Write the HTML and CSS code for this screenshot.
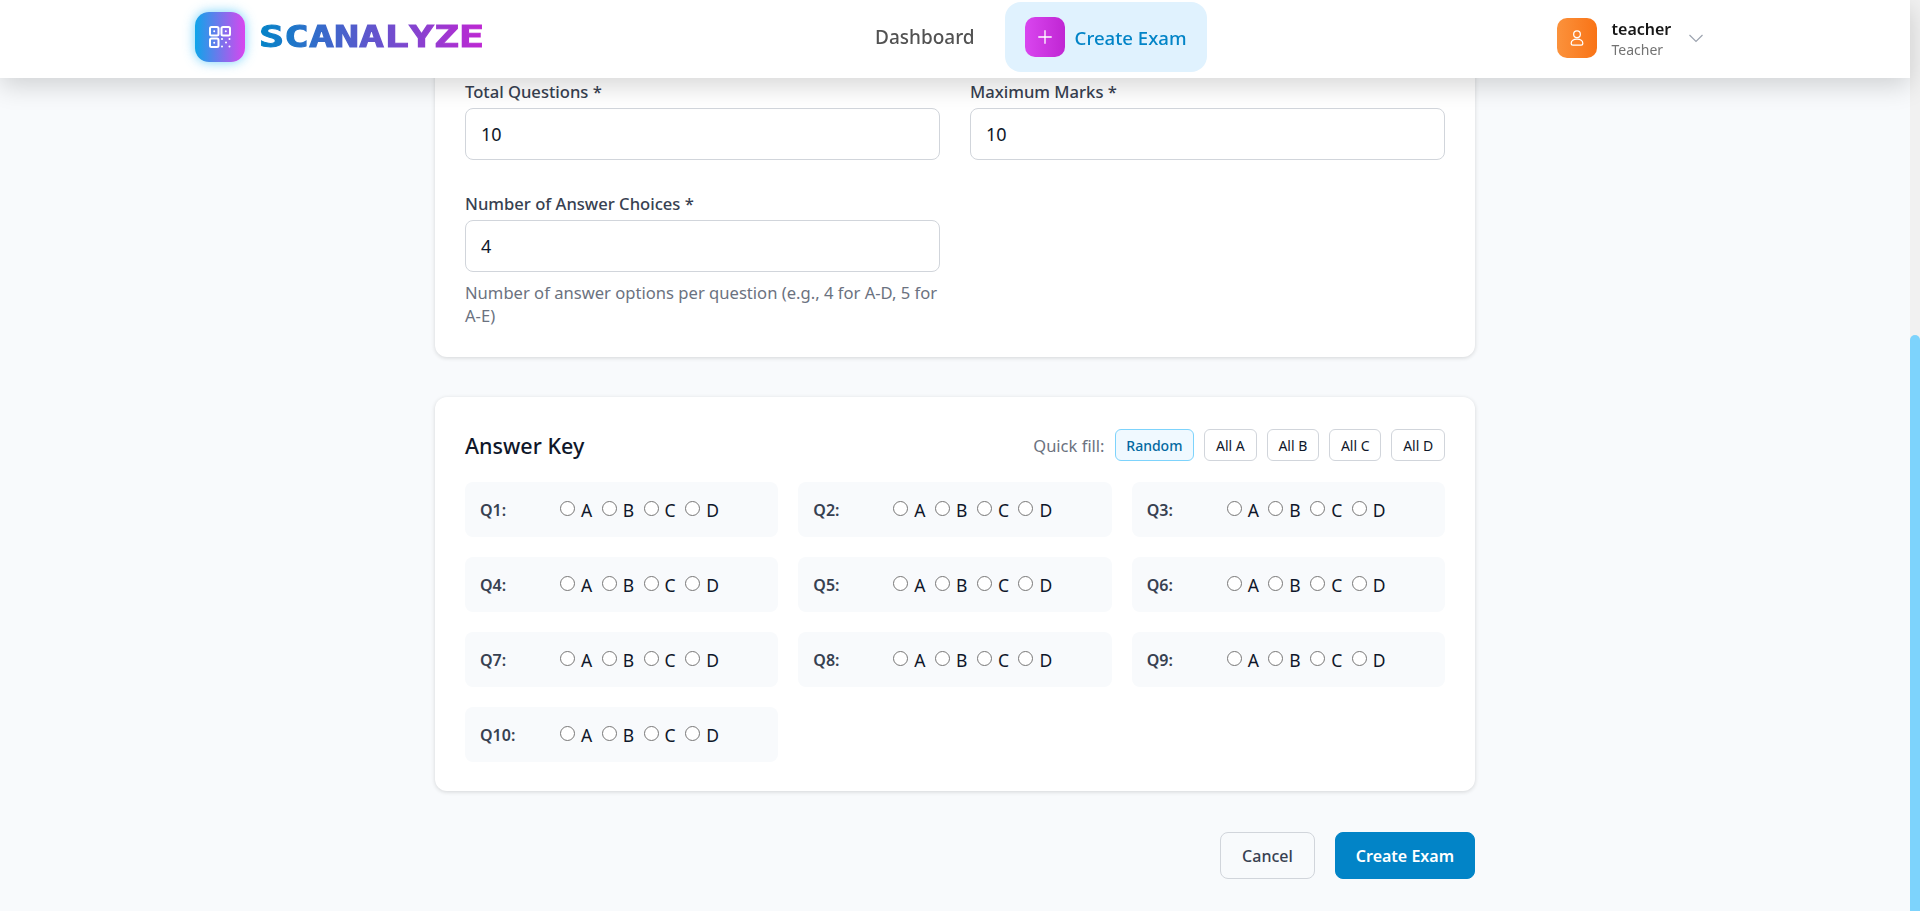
FILE: index.html
```html
<!DOCTYPE html>
<html lang="en">
<head>
    <meta charset="UTF-8">
    <meta name="viewport" content="width=device-width, initial-scale=1.0">
    <title>Create Exam - Scanalyze</title>
    <link rel="stylesheet" href="styles.css">
</head>
<body>
    <div class="page">
        <header class="topbar">
            <div class="brand">
                <div class="brand-icon">
                    <svg width="24" height="24" viewBox="0 0 24 24" fill="none" stroke="white" stroke-width="2" stroke-linecap="round" stroke-linejoin="round">
                        <rect x="2" y="2" width="8.5" height="8.5" rx="1.5"/>
                        <rect x="13.5" y="2" width="8.5" height="8.5" rx="1.5"/>
                        <rect x="2" y="13.5" width="8.5" height="8.5" rx="1.5"/>
                        <path d="M6.2 6.2h.01M17.8 6.2h.01M6.2 17.8h.01M14 14h.01M21.5 14h.01M18 17.5h.01M14 21.5h.01M21.5 21.5h.01"/>
                    </svg>
                </div>
                <span class="brand-name">SCANALYZE</span>
            </div>
            <nav class="nav">
                <a class="nav-link">Dashboard</a>
                <a class="nav-link active">
                    <span class="nav-icon">
                        <svg width="20" height="20" viewBox="0 0 24 24" fill="none" stroke="white" stroke-width="1.6" stroke-linecap="round"><path d="M12 4.5v15M4.5 12h15"/></svg>
                    </span>
                    Create Exam
                </a>
            </nav>
            <div class="user">
                <div class="avatar">
                    <svg width="20" height="20" viewBox="0 0 24 24" fill="none" stroke="white" stroke-width="1.5" stroke-linecap="round" stroke-linejoin="round">
                        <circle cx="12" cy="7.5" r="4"/>
                        <path d="M5 18.5c0-3 3-5.2 7-5.2s7 2.2 7 5.2c0 1.3-1 2-2 2H7c-1 0-2-.7-2-2z"/>
                    </svg>
                </div>
                <div class="user-text">
                    <div class="user-name">teacher</div>
                    <div class="user-role">Teacher</div>
                </div>
                <svg class="chevron" width="16" height="9" viewBox="0 0 16 9" fill="none" stroke="#9ca3af" stroke-width="1.2"><path d="M1.5 1l6.5 6.5L14.5 1"/></svg>
            </div>
        </header>

        <main class="content">
            <section class="card details-card">
                <div class="form-row">
                    <div class="field">
                        <label>Total Questions *</label>
                        <input type="text" value="10">
                    </div>
                    <div class="field">
                        <label>Maximum Marks *</label>
                        <input type="text" value="10">
                    </div>
                </div>
                <div class="form-row">
                    <div class="field">
                        <label>Number of Answer Choices *</label>
                        <input type="text" value="4">
                        <p class="hint">Number of answer options per question (e.g., 4 for A-D, 5 for A-E)</p>
                    </div>
                </div>
            </section>

            <section class="card key-card">
                <div class="key-head">
                    <h2>Answer Key</h2>
                    <div class="quick-fill">
                        <span>Quick fill:</span>
                        <button class="fill-btn random">Random</button>
                        <button class="fill-btn">All A</button>
                        <button class="fill-btn">All B</button>
                        <button class="fill-btn">All C</button>
                        <button class="fill-btn">All D</button>
                    </div>
                </div>
                <div class="key-grid">
                    <div class="question"><span class="q-num">Q1:</span><label><input type="radio" name="q1"> A</label><label><input type="radio" name="q1"> B</label><label><input type="radio" name="q1"> C</label><label><input type="radio" name="q1"> D</label></div>
                    <div class="question"><span class="q-num">Q2:</span><label><input type="radio" name="q2"> A</label><label><input type="radio" name="q2"> B</label><label><input type="radio" name="q2"> C</label><label><input type="radio" name="q2"> D</label></div>
                    <div class="question"><span class="q-num">Q3:</span><label><input type="radio" name="q3"> A</label><label><input type="radio" name="q3"> B</label><label><input type="radio" name="q3"> C</label><label><input type="radio" name="q3"> D</label></div>
                    <div class="question"><span class="q-num">Q4:</span><label><input type="radio" name="q4"> A</label><label><input type="radio" name="q4"> B</label><label><input type="radio" name="q4"> C</label><label><input type="radio" name="q4"> D</label></div>
                    <div class="question"><span class="q-num">Q5:</span><label><input type="radio" name="q5"> A</label><label><input type="radio" name="q5"> B</label><label><input type="radio" name="q5"> C</label><label><input type="radio" name="q5"> D</label></div>
                    <div class="question"><span class="q-num">Q6:</span><label><input type="radio" name="q6"> A</label><label><input type="radio" name="q6"> B</label><label><input type="radio" name="q6"> C</label><label><input type="radio" name="q6"> D</label></div>
                    <div class="question"><span class="q-num">Q7:</span><label><input type="radio" name="q7"> A</label><label><input type="radio" name="q7"> B</label><label><input type="radio" name="q7"> C</label><label><input type="radio" name="q7"> D</label></div>
                    <div class="question"><span class="q-num">Q8:</span><label><input type="radio" name="q8"> A</label><label><input type="radio" name="q8"> B</label><label><input type="radio" name="q8"> C</label><label><input type="radio" name="q8"> D</label></div>
                    <div class="question"><span class="q-num">Q9:</span><label><input type="radio" name="q9"> A</label><label><input type="radio" name="q9"> B</label><label><input type="radio" name="q9"> C</label><label><input type="radio" name="q9"> D</label></div>
                    <div class="question"><span class="q-num">Q10:</span><label><input type="radio" name="q10"> A</label><label><input type="radio" name="q10"> B</label><label><input type="radio" name="q10"> C</label><label><input type="radio" name="q10"> D</label></div>
                </div>
            </section>

            <div class="actions">
                <button class="btn btn-cancel">Cancel</button>
                <button class="btn btn-primary">Create Exam</button>
            </div>
        </main>

        <div class="scrollbar"><div class="scrollbar-thumb"></div></div>
    </div>
</body>
</html>
```

FILE: styles.css
```css
* {
    box-sizing: border-box;
}
body {
    font-family: "Noto Sans", Arial, sans-serif;
    margin: 0;
    padding: 0;
    background-color: #f8fafc;
    color: #0f172a;
    overflow: hidden;
}
.page {
    display: flex;
    height: 911px;
    overflow: hidden;
}

/* top bar stays over the scrolled form */
.topbar {
    position: fixed;
    top: 0;
    left: 0;
    width: 1910px;
    height: 78px;
    display: flex;
    align-items: center;
    padding-left: 195px;
    padding-bottom: 4px;
    background-color: white;
    box-shadow: 0 8px 24px rgba(0, 0, 0, 0.16);
    z-index: 10;
}
.brand {
    display: flex;
    align-items: center;
    width: 288px;
}
.brand-icon {
    width: 50px;
    height: 50px;
    display: flex;
    align-items: center;
    justify-content: center;
    border-radius: 14px;
    background: linear-gradient(90deg, #0ea5e9, #d946ef);
    box-shadow: 0 0 12px rgba(56, 189, 248, 0.7);
}
.brand-name {
    margin-left: 14px;
    font-family: "DejaVu Sans Mono", monospace;
    font-size: 30px;
    font-weight: 700;
    line-height: 34px;
    background: linear-gradient(90deg, #0284c7, #c026d3);
    -webkit-background-clip: text;
    background-clip: text;
    color: transparent;
    -webkit-text-stroke: 1px transparent;
    transform: scaleX(1.385);
    transform-origin: left center;
}
.nav {
    display: flex;
    align-items: center;
    gap: 10px;
    margin-left: 372px;
}
.nav-link {
    display: flex;
    align-items: center;
    height: 70px;
    padding: 0 20px;
    font-size: 19px;
    font-weight: 500;
    color: #525252;
    border-radius: 16px;
}
.nav-link.active {
    gap: 10px;
    font-size: 18.6px;
    color: #0284c7;
    background-color: #e0f2fe;
}
.nav-icon {
    width: 40px;
    height: 40px;
    display: flex;
    align-items: center;
    justify-content: center;
    border-radius: 10px;
    background: linear-gradient(90deg, #d946ef, #c026d3);
}
.user {
    display: flex;
    align-items: center;
    margin-left: 350px;
    padding-top: 2px;
}
.avatar {
    width: 40px;
    height: 40px;
    display: flex;
    align-items: center;
    justify-content: center;
    border-radius: 10px;
    background: linear-gradient(90deg, #fb923c, #f97316);
}
.user-text {
    margin-left: 15px;
    padding-top: 2px;
}
.user-name {
    font-size: 16px;
    font-weight: 600;
    line-height: 22px;
    color: #171717;
}
.user-role {
    font-size: 14px;
    line-height: 20px;
    color: #737373;
}
.chevron {
    margin-left: 17px;
}

.content {
    width: 1910px;
    padding: 51px 435px 0;
}
.card {
    padding: 30px;
    background-color: white;
    border-radius: 12px;
    box-shadow: 0 1px 4px rgba(0, 0, 0, 0.15);
}
.form-row {
    display: grid;
    grid-template-columns: 1fr 1fr;
    gap: 30px;
    margin-bottom: 33px;
}
.form-row:last-child {
    margin-bottom: 0;
}
.field label {
    display: block;
    margin-bottom: 5px;
    font-size: 16.6px;
    font-weight: 500;
    line-height: 22px;
    color: #374151;
}
.field input {
    width: 100%;
    height: 52px;
    padding: 0 15px;
    border: 1px solid #d1d5db;
    border-radius: 8px;
    font-family: inherit;
    font-size: 18px;
    color: #0f172a;
}
.hint {
    margin: 9.3px 0 0;
    font-size: 16.6px;
    line-height: 23px;
    color: #6b7280;
}

.key-card {
    margin-top: 40px;
    padding-top: 32px;
    padding-bottom: 29px;
}
.key-head {
    display: flex;
    align-items: center;
    justify-content: space-between;
    margin-bottom: 21px;
}
.key-head h2 {
    margin: 0;
    font-size: 21.5px;
    font-weight: 500;
    color: #0f172a;
}
.quick-fill {
    display: flex;
    align-items: center;
    gap: 10px;
}
.quick-fill span {
    font-size: 16.5px;
    color: #6b7280;
}
.fill-btn {
    height: 32px;
    padding: 0 10.8px;
    border: 1px solid #d1d5db;
    border-radius: 6px;
    background-color: white;
    font-family: inherit;
    font-size: 14px;
    color: #0f172a;
}
.fill-btn.random {
    font-weight: 500;
    color: #0369a1;
    background-color: #f0f9ff;
    border-color: #7dd3fc;
}
.key-grid {
    display: grid;
    grid-template-columns: repeat(3, 1fr);
    gap: 20px;
}
.question {
    display: flex;
    align-items: center;
    height: 55px;
    padding: 0 15px;
    background-color: #f8fafc;
    border-radius: 8px;
    font-size: 16px;
}
.q-num {
    width: 80px;
    font-weight: 600;
    color: #374151;
}
.question label {
    display: inline-flex;
    align-items: center;
    margin-right: 9.5px;
    font-size: 17.5px;
    color: #0f172a;
}
.question input {
    width: 15px;
    height: 15px;
    margin: 0 6px 2px 0;
}

.actions {
    display: flex;
    justify-content: flex-end;
    gap: 20px;
    margin-top: 41px;
}
.btn {
    height: 47px;
    padding: 0 21px;
    border-radius: 8px;
    font-family: inherit;
    font-size: 16px;
    font-weight: 500;
}
.btn-cancel {
    color: #374151;
    background-color: #f8fafc;
    border: 1px solid #d1d5db;
}
.btn-primary {
    padding: 0 20px;
    color: white;
    background-color: #0284c7;
    border: 1px solid #0284c7;
    font-weight: 600;
}

/* page scrollbar, shown at its scrolled position */
.scrollbar {
    flex: none;
    width: 10px;
    height: 911px;
    padding-top: 335px;
    background-color: #f1f1f1;
}
.scrollbar-thumb {
    height: 576px;
    border-radius: 5px 5px 0 0;
    background-color: #7dd3fc;
}
```
